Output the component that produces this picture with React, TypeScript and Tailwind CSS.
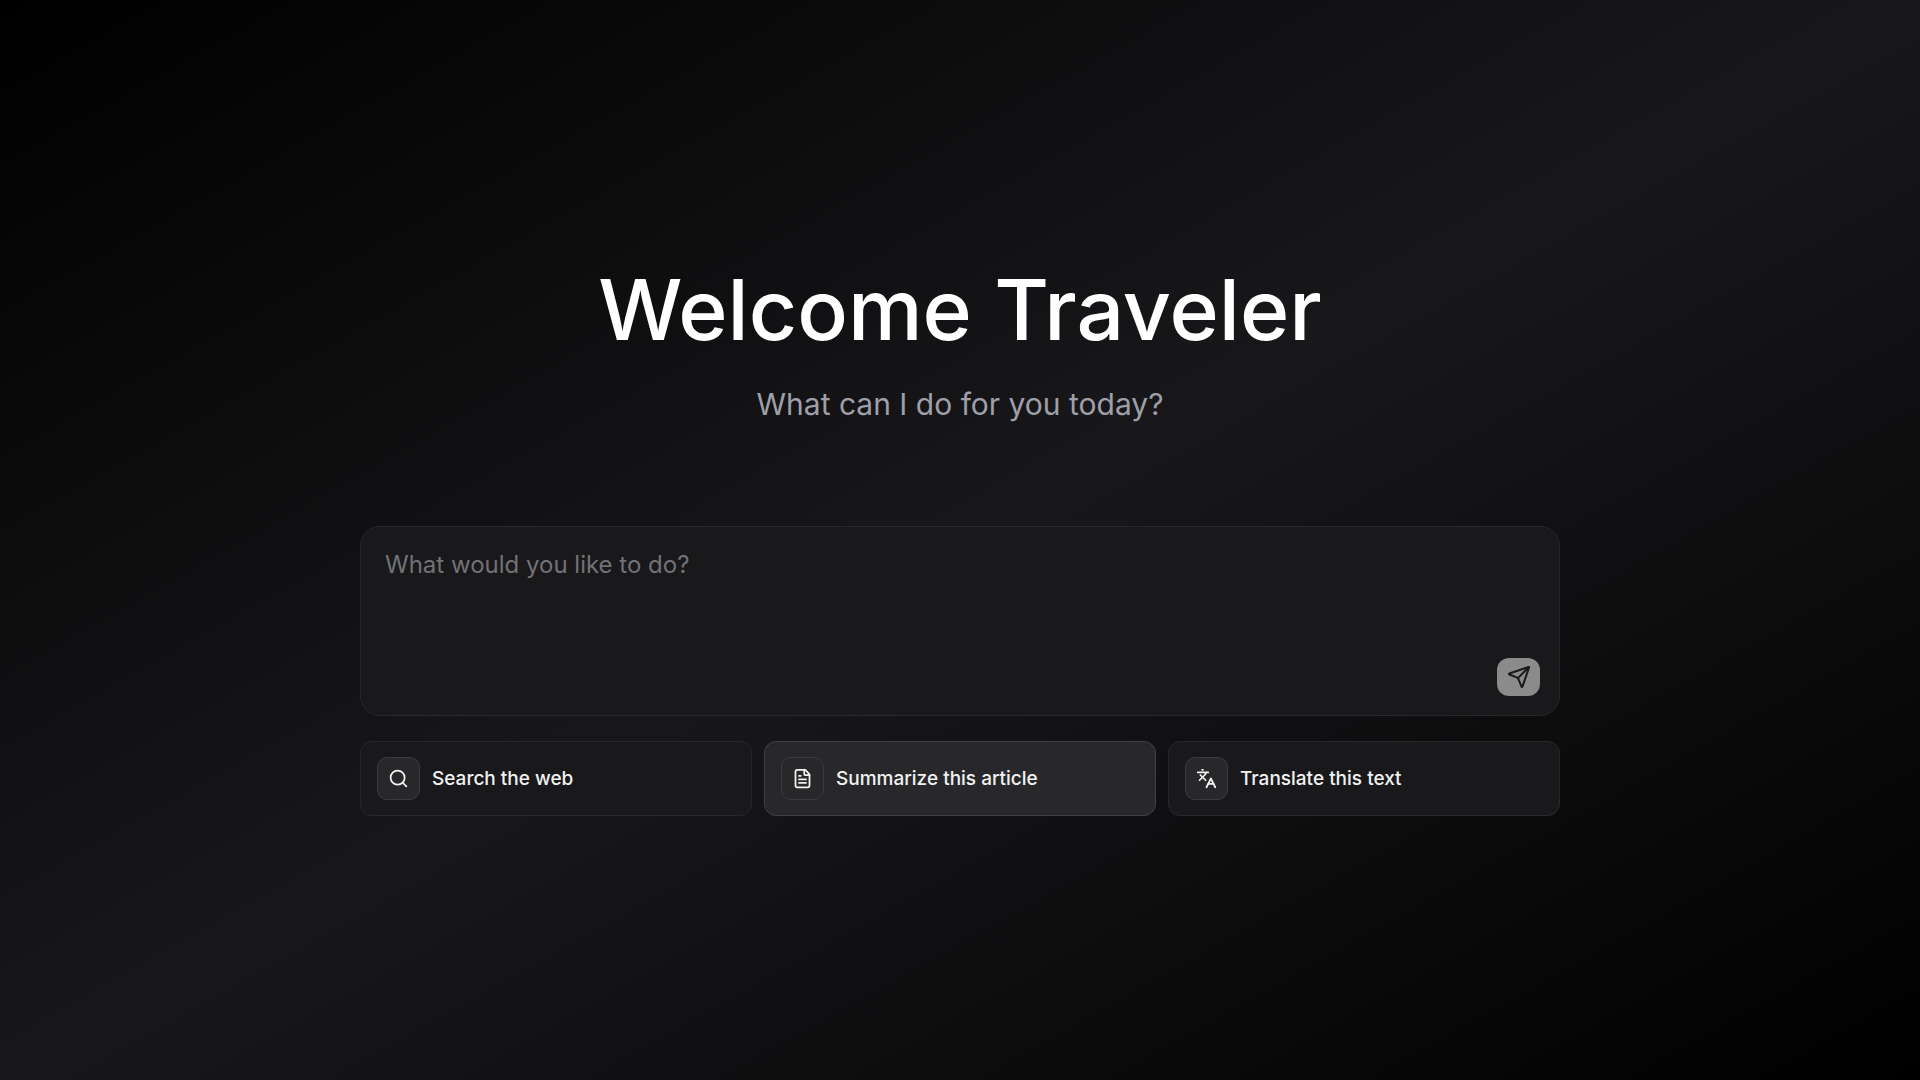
import { useState } from "react";
import type { ComponentType } from "react";
import { FileText, Languages, Search, Send } from "lucide-react";

type Action = {
  label: string;
  icon: ComponentType<{ className?: string; strokeWidth?: number }>;
  highlighted?: boolean;
};

const actions: Action[] = [
  { label: "Search the web", icon: Search },
  { label: "Summarize this article", icon: FileText, highlighted: true },
  { label: "Translate this text", icon: Languages },
];

function PromptBox() {
  const [prompt, setPrompt] = useState("");
  return (
    <form
      onSubmit={(event) => event.preventDefault()}
      className="flex flex-col rounded-[20px] border border-[#28282b] bg-[#19191b]"
    >
      <textarea
        aria-label="What would you like to do?"
        value={prompt}
        onChange={(event) => setPrompt(event.target.value)}
        placeholder="What would you like to do?"
        className="block h-[131px] w-full resize-none bg-transparent px-6 pt-5 text-2xl leading-9 text-zinc-100 outline-none placeholder:text-[#727276]"
      />
      <div className="flex justify-end px-[19px] pb-[19px]">
        <button
          type="submit"
          aria-label="Send"
          className="flex h-[38px] w-[43px] items-center justify-center rounded-xl bg-[#8b8b8c] text-[#19191b]"
        >
          <Send className="size-6" strokeWidth={2} />
        </button>
      </div>
    </form>
  );
}

function ActionButton({ label, icon: Icon, highlighted }: Action) {
  return (
    <button
      type="button"
      className={`flex items-center gap-3 rounded-xl border px-4 py-[15px] text-left text-[19px] leading-6 font-medium text-[#f1f1f2] ${
        highlighted ? "border-[#414144] bg-[#28282a]" : "border-[#28282b] bg-[#19191b]"
      }`}
    >
      <span className="flex size-[43px] shrink-0 items-center justify-center rounded-[10px] border border-[#3c3c3f] bg-[#28282a]">
        <Icon className="size-[21px]" strokeWidth={2} />
      </span>
      {label}
    </button>
  );
}

export default function App() {
  return (
    <main className="flex min-h-screen flex-col items-center justify-center bg-[linear-gradient(to_bottom_right,#000000,#18181b,#000000)] px-6 font-['Inter',sans-serif]">
      <div className="w-full max-w-[1200px]">
        <header className="pb-[102px] text-center">
          <h1 className="text-[84px] leading-[92px] font-medium text-white">Welcome Traveler</h1>
          <p className="pt-7 text-[30px] leading-10 text-zinc-400">What can I do for you today?</p>
        </header>
        <PromptBox />
        <div className="grid grid-cols-3 gap-3 pt-[25px]">
          {actions.map((action) => (
            <ActionButton key={action.label} {...action} />
          ))}
        </div>
      </div>
    </main>
  );
}
